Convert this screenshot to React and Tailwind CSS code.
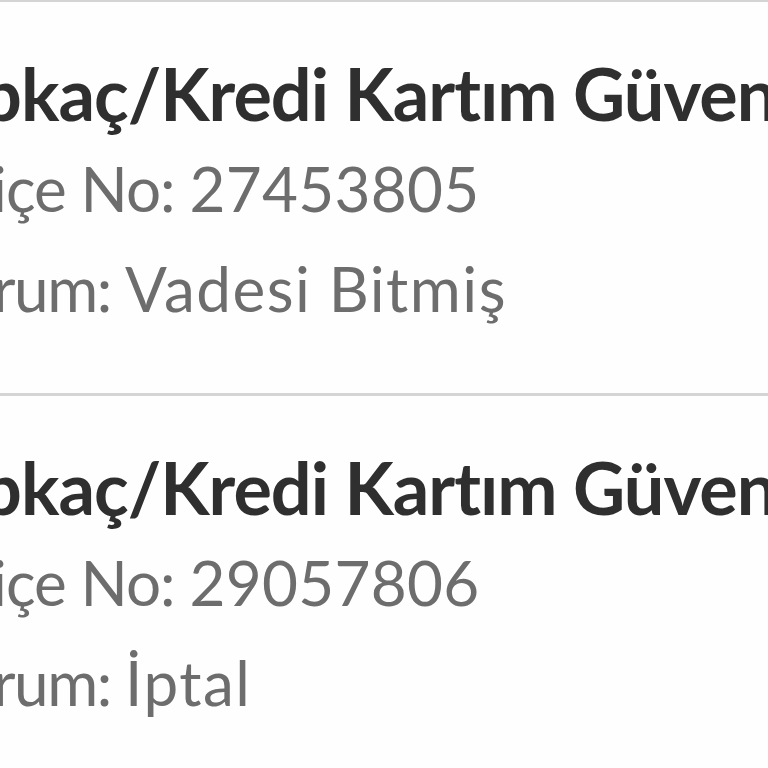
export default function App() {
  const policies = [
    { no: '27453805', status: 'Vadesi Bitmiş' },
    { no: '29057806', status: 'İptal' },
  ]

  return (
    <div className="w-[768px] h-[768px] overflow-hidden bg-[#fefefe]" style={{ fontFamily: 'Lato, "Noto Sans", sans-serif' }}>
      <div className="-mt-px">
        {policies.map((p) => (
          <div key={p.no} className="h-[394px] border-t-[3px] border-[#d4d4d4] pt-[55px] whitespace-nowrap">
            <div className="-ml-[19px] text-[72px] leading-[72px] font-bold tracking-[-1px] text-[#2f2f2f]">
              pkaç/Kredi Kartım Güvende
            </div>
            <div className="-ml-[8px] mt-[28px] text-[62px] leading-[62px] text-[#6d6d6d]">
              <span className="tracking-[-1px]">içe No: </span>
              <span className="tracking-[0.3px]">{p.no}</span>
            </div>
            <div className="-ml-[7px] mt-[38px] text-[62px] leading-[62px] text-[#6d6d6d]">
              <span className="tracking-[-1.5px]">rum: </span>
              <span className="tracking-[1.5px]">{p.status}</span>
            </div>
          </div>
        ))}
      </div>
    </div>
  )
}
